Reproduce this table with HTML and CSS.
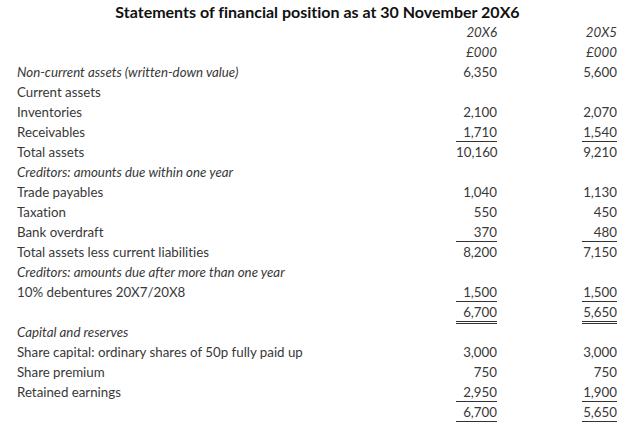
FILE: index.html
```html
<!DOCTYPE html>
<html>
<head>
<meta charset="utf-8">
<link rel="stylesheet" href="styles.css">
</head>
<body>
<div class="sheet">
  <div class="title">Statements of financial position as at 30 November 20X6</div>

  <div class="label"></div><div class="num c1 it">20X6</div><div class="num c2 it">20X5</div>
  <div class="label"></div><div class="num c1 it">£000</div><div class="num c2 it">£000</div>

  <div class="label it">Non-current assets (written-down value)</div><div class="num c1">6,350</div><div class="num c2">5,600</div>
  <div class="label">Current assets</div><div class="num c1"></div><div class="num c2"></div>
  <div class="label">Inventories</div><div class="num c1">2,100</div><div class="num c2">2,070</div>
  <div class="label">Receivables</div><div class="num c1 ul">1,710</div><div class="num c2 ul">1,540</div>
  <div class="label">Total assets</div><div class="num c1">10,160</div><div class="num c2">9,210</div>
  <div class="label it">Creditors: amounts due within one year</div><div class="num c1"></div><div class="num c2"></div>
  <div class="label">Trade payables</div><div class="num c1">1,040</div><div class="num c2">1,130</div>
  <div class="label">Taxation</div><div class="num c1">550</div><div class="num c2">450</div>
  <div class="label">Bank overdraft</div><div class="num c1 ul">370</div><div class="num c2 ul">480</div>
  <div class="label">Total assets less current liabilities</div><div class="num c1">8,200</div><div class="num c2">7,150</div>
  <div class="label it">Creditors: amounts due after more than one year</div><div class="num c1"></div><div class="num c2"></div>
  <div class="label">10% debentures 20X7/20X8</div><div class="num c1 ul">1,500</div><div class="num c2 ul">1,500</div>
  <div class="label"></div><div class="num c1 dbl">6,700</div><div class="num c2 dbl">5,650</div>

  <div class="label it">Capital and reserves</div><div class="num c1"></div><div class="num c2"></div>
  <div class="label">Share capital: ordinary shares of 50p fully paid up</div><div class="num c1">3,000</div><div class="num c2">3,000</div>
  <div class="label">Share premium</div><div class="num c1">750</div><div class="num c2">750</div>
  <div class="label">Retained earnings</div><div class="num c1 ul">2,950</div><div class="num c2 ul">1,900</div>
  <div class="label"></div><div class="num c1 dbl">6,700</div><div class="num c2 dbl">5,650</div>
</div>
</body>
</html>
```

FILE: styles.css
```css
html, body {
  margin: 0;
  padding: 0;
  background: #fff;
}

body {
  font-family: Lato, "Open Sans", sans-serif;
  font-size: 13.3px;
  color: #383838;
  font-variant-ligatures: none;
}

.sheet {
  display: grid;
  grid-template-columns: 1fr 41px 120px;
  grid-auto-rows: 20px;
  width: 600px;
  margin-left: 17px;
  padding-top: 2px;
}

.title {
  grid-column: 1 / -1;
  font-weight: bold;
  font-size: 16px;
  color: #111;
  line-height: 20px;
  text-align: center;
  padding-left: 1px;
}

.label {
  line-height: 20px;
  white-space: nowrap;
}

.num {
  line-height: 20px;
  text-align: right;
  justify-self: end;
  height: 20px;
}

.c1 { width: 41px; }
.c2 { width: 35px; }

.it { font-style: italic; }

.ul {
  box-shadow: inset 0 -1px 0 #333;
}

.dbl {
  box-shadow: inset 0 -1px 0 #333, 0 1px 0 #fff, 0 2px 0 #333;
}
```
